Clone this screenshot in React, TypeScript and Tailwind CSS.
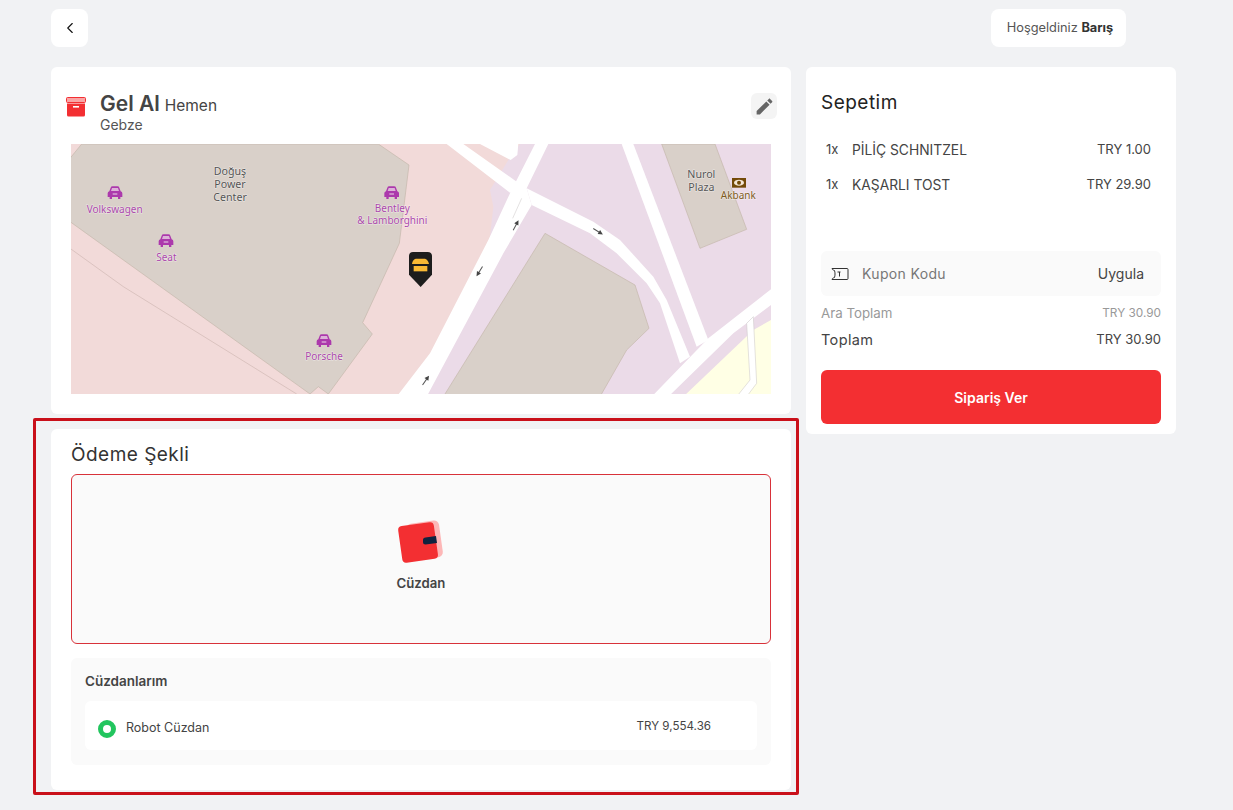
import { ChevronLeft } from "lucide-react";

const font = { fontFamily: "Inter, 'Liberation Sans', sans-serif" };

const CarIcon = ({ x, y }: { x: number; y: number }) => (
  <g transform={`translate(${x - 22} ${y - 19})`} fill="#ac39ac">
    <path d="M5 15 L9 4 Q10 0 15 0 L29 0 Q34 0 35 4 L39 15 Q44 17 44 21 L44 32 L38 32 L38 38 L31 38 L31 32 L13 32 L13 38 L6 38 L6 32 L0 32 L0 21 Q0 17 5 15 Z" />
    <path d="M10 14 L13 5 L31 5 L34 14 Z" fill="#dcb2d8" />
    <rect x={15} y={21} width={14} height={4} fill="#dcb2d8" />
  </g>
);

const MapText = ({
  x,
  y,
  fill,
  size = 30,
  children,
}: {
  x: number;
  y: number;
  fill: string;
  size?: number;
  children: string;
}) => (
  <text
    x={x}
    y={y}
    fill={fill}
    fontSize={size}
    textAnchor="middle"
    stroke="#ffffff"
    strokeOpacity={0.55}
    strokeWidth={3}
    paintOrder="stroke"
    style={{ fontFamily: "'Noto Sans', sans-serif" }}
  >
    {children}
  </text>
);

const RoadArrow = ({ x, y, angle }: { x: number; y: number; angle: number }) => (
  <g transform={`translate(${x} ${y}) rotate(${angle})`}>
    <path d="M-18 0 L6 0" stroke="#555" strokeWidth={3} />
    <path d="M16 0 L2 -7 L2 7 Z" fill="#444" />
  </g>
);

const MapView = () => (
  <svg viewBox="0 0 2100 750" className="block w-[700px] h-[250px]">
    <rect width="2100" height="750" fill="#f2dad9" />
    {/* left side, coordinates taken from the left half */}
    <g transform="translate(-3 -12)">
      <path
        d="M35 12 L925 12 L1017 75 L988 310 L878 548 L907 582 L775 762 L745 740 L720 762 L0 245 L0 55 Z"
        fill="#d9d0c9"
        stroke="#c4b6ab"
        strokeWidth={2}
      />
      <path d="M0 325 L160 440 L680 762" fill="none" stroke="#cfb6b2" strokeWidth={2} />
      <CarIcon x={135} y={158} />
      <CarIcon x={288} y={302} />
      <CarIcon x={965} y={158} />
      <CarIcon x={762} y={602} />
      <MapText x={134} y={219} fill="#ab48ab">Volkswagen</MapText>
      <MapText x={289} y={362} fill="#ab48ab">Seat</MapText>
      <MapText x={967} y={217} fill="#ab48ab">Bentley</MapText>
      <MapText x={967} y={252} fill="#ab48ab">{"& Lamborghini"}</MapText>
      <MapText x={762} y={661} fill="#ab48ab">Porsche</MapText>
      <MapText x={480} y={104} fill="#555555" size={32}>Doğuş</MapText>
      <MapText x={480} y={143} fill="#555555" size={32}>Power</MapText>
      <MapText x={480} y={182} fill="#555555" size={32}>Center</MapText>
    </g>
    {/* right side, coordinates taken from the right half */}
    <g transform="translate(1047 -12)">
      <path d="M300 12 L1060 12 L1060 770 L0 770 L210 290 L220 200 L210 150 L265 60 Z" fill="#ebdbe8" />
      <path d="M1053 540 L1000 570 L790 770 L1060 770 Z" fill="#ffffe5" />
      <path d="M375 280 L645 435 L687 565 L620 630 L540 770 L70 770 Z" fill="#d9d0c9" stroke="#c4b6ab" strokeWidth={2} />
      <path d="M725 12 L885 12 L980 268 L840 325 Z" fill="#d9d0c9" stroke="#c4b6ab" strokeWidth={2} />
      {/* roads */}
      <path d="M345 12 L385 12 L320 145 L335 195 L250 340 L20 770 L-70 770 L30 640 L205 300 L270 160 Z" fill="#ffffff" />
      <path d="M80 12 L130 12 L290 125 L320 145 L270 158 Z" fill="#ffffff" />
      <path d="M180 12 L295 12 L292 45 L272 60 Z" fill="#ffffff" />
      <path d="M320 145 L520 245 L600 300 L700 410 L740 480 L810 650 L780 670 L720 490 L680 430 L590 340 L510 280 L335 195 Z" fill="#ffffff" />
      <path d="M605 12 L640 12 L865 600 L830 620 Z" fill="#ffffff" />
      <path d="M1060 442 L865 595 L695 770 L745 770 L940 580 L1060 490 Z" fill="#ffffff" />
      <path d="M980 550 L990 720 L950 770 L980 770 L1010 730 L1000 530 Z" fill="#ffffff" stroke="#c9c4c4" strokeWidth={1.5} />
      <path d="M305 175 L278 235" stroke="#c9c4c4" strokeWidth={1.5} />
      <RoadArrow x={288} y={255} angle={-62} />
      <RoadArrow x={178} y={395} angle={122} />
      <RoadArrow x={535} y={275} angle={32} />
      <RoadArrow x={18} y={720} angle={-55} />
      <MapText x={844} y={113} fill="#555555" size={32}>Nurol</MapText>
      <MapText x={844} y={152} fill="#555555" size={32}>Plaza</MapText>
      <MapText x={955} y={178} fill="#7d5a20">Akbank</MapText>
      <rect x={936} y={114} width={42} height={29} fill="#734a08" />
      <ellipse cx={957} cy={128} rx={15} ry={9} fill="#f4e6d4" />
      <circle cx={957} cy={128} r={6} fill="#734a08" />
    </g>
    {/* store pin */}
    <g transform="translate(1014 324)">
      <path d="M12 0 L56 0 Q69 0 69 13 L69 68 L35 105 L0 68 L0 13 Q0 0 12 0 Z" fill="#1d1d1d" />
      <path d="M20 20 L48 20 Q58 24 60 36 L9 36 Q10 24 20 20 Z" fill="#f9b934" />
      <path d="M14 42 L55 42 L55 58 L14 58 Z" fill="#f9b934" />
    </g>
  </svg>
);

const WalletIcon = () => (
  <svg width="50" height="46" viewBox="0 0 50 46" fill="none">
    <rect x="12" y="3" width="33" height="37" rx="5" fill="#fdb7b7" transform="rotate(-8 28 21)" />
    <rect x="4" y="5" width="36" height="37" rx="4" fill="#f32f32" transform="rotate(-8 22 23)" />
    <path d="M27 21 Q27 18.5 29.5 18.5 L40 17 L41 24 L29.5 25.5 Q27 25.5 27 23 Z" fill="#10233f" />
  </svg>
);

const App = () => {
  return (
    <div className="relative min-h-[810px] bg-[#f1f2f4] px-[51px] pt-[9px]" style={font}>
      <div className="flex w-[1125px] items-center justify-between pr-[50px]">
        <button className="flex h-[38px] w-[37px] items-center justify-center rounded-lg bg-white">
          <ChevronLeft size={18} strokeWidth={1.5} color="#111" />
        </button>
        <div className="flex h-[38px] w-[135px] items-center justify-center rounded-lg bg-white pl-[3px] text-[12.8px] text-[#555]">
          Hoşgeldiniz&nbsp;<b className="font-bold text-[#333]">Barış</b>
        </div>
      </div>

      <div className="mt-5 flex w-[1125px] items-start gap-[15px]">
        <div className="flex w-[740px] flex-col gap-[15px]">
          <section className="h-[347px] rounded-md bg-white px-5 pt-[26px]">
            <div className="flex h-[51px] items-start">
              <svg width="20" height="20" viewBox="0 0 20 20" className="-ml-[5px] mt-1" fill="#f32f32">
                <rect x="0.5" y="0.5" width="19" height="5" rx="1" fill="#f9a5a5" stroke="#f32f32" />
                <path d="M1 6.5h18V18a1.5 1.5 0 0 1-1.5 1.5h-15A1.5 1.5 0 0 1 1 18Z" />
                <rect x="7" y="9" width="6" height="1.6" fill="#fff" />
              </svg>
              <div className="ml-[14px] flex-1">
                <div className="flex items-baseline gap-[5px] leading-[22px] text-[#444]">
                  <span className="text-[21px] font-semibold">Gel Al</span>
                  <span className="text-[15.5px]">Hemen</span>
                </div>
                <div className="text-[14px] leading-[15px] text-[#555]">Gebze</div>
              </div>
              <button className="-mr-[6px] flex h-[26px] w-[26px] items-center justify-center rounded-md bg-[#f4f4f4]">
                <svg width="21" height="21" viewBox="0 0 24 24" fill="#666">
                  <path d="M3 17.25V21h3.75L17.81 9.94l-3.75-3.75L3 17.25zM20.71 7.04c.39-.39.39-1.02 0-1.41l-2.34-2.34c-.39-.39-1.02-.39-1.41 0l-1.83 1.83 3.75 3.75 1.83-1.83z" />
                </svg>
              </button>
            </div>
            <MapView />
          </section>

          <section className="h-[361px] rounded-md bg-white px-5 pt-[13px]">
            <h2 className="text-[19px] font-normal leading-[25px] tracking-wide text-[#333]">Ödeme Şekli</h2>
            <div className="mt-[7px] flex h-[170px] flex-col items-center rounded-md border border-[#d8323a] bg-[#fafafa] pt-[44px]">
              <WalletIcon />
              <span className="mt-[10px] text-[13.2px] font-semibold leading-4 text-[#444]">Cüzdan</span>
            </div>
            <div className="mt-[14px] h-[107px] rounded-md bg-[#fafafa] px-[14px] pt-[15px]">
              <h3 className="text-[13.5px] font-semibold leading-[16px] text-[#444]">Cüzdanlarım</h3>
              <div className="mt-[12px] flex h-[49px] items-center rounded-md bg-white pl-[13px] pr-[46px]">
                <span className="mt-[6px] h-[18px] w-[18px] rounded-full border-[5px] border-[#22c55e] bg-white" />
                <span className="ml-[10px] mt-[6px] flex-1 text-[12.5px] text-[#444]">Robot Cüzdan</span>
                <span className="mt-[2px] text-[11.6px] text-[#444]">TRY 9,554.36</span>
              </div>
            </div>
          </section>
        </div>

        <aside className="h-[367px] w-[370px] rounded-md bg-white px-[15px] pt-[22px]">
          <h2 className="text-[19px] font-normal leading-[27px] tracking-wide text-[#222]">Sepetim</h2>
          <div className="mt-[24px] flex flex-col gap-[15px] pl-[5px] pr-[10px] text-[13.8px] text-[#444]">
            <div className="flex h-5 items-center">
              <span className="w-[26px] text-[13px]">1x</span>
              <span className="flex-1">PİLİÇ SCHNITZEL</span>
              <span className="text-[13px]">TRY 1.00</span>
            </div>
            <div className="flex h-5 items-center">
              <span className="w-[26px] text-[13px]">1x</span>
              <span className="flex-1">KAŞARLI TOST</span>
              <span className="text-[13px]">TRY 29.90</span>
            </div>
          </div>
          <div className="mt-[56px] flex h-[45px] items-center rounded-md bg-[#fafafa] pl-[10px] pr-[17px]">
            <svg width="18" height="14" viewBox="0 0 18 14" fill="none" stroke="#333" strokeWidth="1">
              <path d="M1 1.5h15a1 1 0 0 1 1 1v9a1 1 0 0 1-1 1H1c0-1 1-1.5 2.5-2 .7-2 .7-5 0-7C2 3 1 2.5 1 1.5Z" />
              <path d="M6.5 5h3M8.5 5v4.5" />
            </svg>
            <span className="ml-[13px] flex-1 text-[14px] tracking-wide text-[#777]">Kupon Kodu</span>
            <span className="text-[14px] text-[#444]">Uygula</span>
          </div>
          <div className="mt-[10px] flex h-4 items-center justify-between text-[#999]">
            <span className="text-[13.3px]">Ara Toplam</span>
            <span className="text-[11.8px]">TRY 30.90</span>
          </div>
          <div className="mt-[10px] flex h-4 items-center justify-between text-[#444]">
            <span className="text-[14.5px] tracking-wide">Toplam</span>
            <span className="text-[13px]">TRY 30.90</span>
          </div>
          <button className="mt-[22px] h-[54px] w-full rounded-md bg-[#f32f32] text-[14px] font-semibold text-white">
            Sipariş Ver
          </button>
        </aside>
      </div>

      {/* highlight frame */}
      <div className="pointer-events-none absolute left-[33px] top-[418px] h-[377px] w-[766px] rounded-[2px] border-[3px] border-[#c9101a]" />
    </div>
  );
};

export default App;
